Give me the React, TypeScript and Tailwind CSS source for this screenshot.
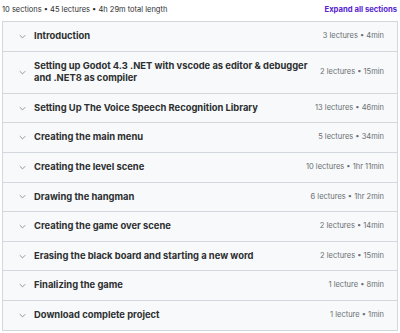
import React from 'react';

interface Section {
    title: string;
    meta: string;
}

const sections: Section[] = [
    { title: 'Introduction', meta: '3 lectures • 4min' },
    { title: 'Setting up Godot 4.3 .NET with vscode as editor & debugger and .NET8 as compiler', meta: '2 lectures • 15min' },
    { title: 'Setting Up The Voice Speech Recognition Library', meta: '13 lectures • 46min' },
    { title: 'Creating the main menu', meta: '5 lectures • 34min' },
    { title: 'Creating the level scene', meta: '10 lectures • 1hr 11min' },
    { title: 'Drawing the hangman', meta: '6 lectures • 1hr 2min' },
    { title: 'Creating the game over scene', meta: '2 lectures • 14min' },
    { title: 'Erasing the black board and starting a new word', meta: '2 lectures • 15min' },
    { title: 'Finalizing the game', meta: '1 lecture • 8min' },
    { title: 'Download complete project', meta: '1 lecture • 1min' },
];

const Chevron: React.FC = () => (
    <svg className="w-[7px] h-[7px] text-[#6a6f73] shrink-0" viewBox="0 0 10 10" fill="none">
        <path d="M1.5 3.5 5 7l3.5-3.5" stroke="currentColor" strokeWidth={1} strokeLinecap="round" strokeLinejoin="round" />
    </svg>
);

const App: React.FC = () => {
    return (
        <div className="w-[400px] h-[333px] bg-white px-[2px] pt-[2px] overflow-hidden" style={{ fontFamily: 'Inter, "Noto Sans", sans-serif' }}>
            <div className="flex justify-between items-center h-[16px] mb-[3px]">
                <span className="text-[7.5px] text-[#2d2f31]">10 sections • 45 lectures • 4h 29m total length</span>
                <button className="text-[7.7px] font-bold text-[#5624d0] mr-[1px]">Expand all sections</button>
            </div>
            <div className="border border-[#d1d7dc]">
                {sections.map((s, i) => (
                    <div key={i} className={`flex items-center bg-[#f7f9fa] pl-[16px] pr-[13px] py-[8px] ${i > 0 ? 'border-t border-[#d1d7dc]' : ''}`}>
                        <Chevron />
                        <div className="ml-[8px] w-[275px] text-[9.4px] font-bold leading-[12.6px] text-[#2d2f31]">{s.title}</div>
                        <div className="flex-1 text-right text-[7.5px] text-[#6a6f73] leading-[12.6px] whitespace-nowrap">{s.meta}</div>
                    </div>
                ))}
            </div>
        </div>
    );
};

export default App;
